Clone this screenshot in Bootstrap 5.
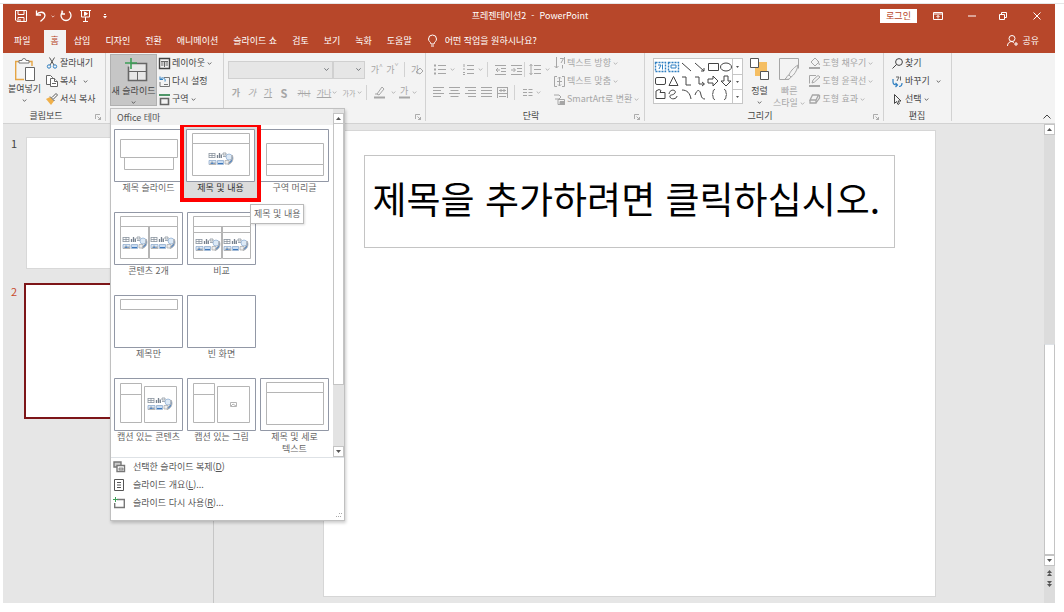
<!DOCTYPE html>
<html lang="ko">
<head>
<meta charset="utf-8">
<meta name="viewport" content="width=device-width, initial-scale=1">
<title>프레젠테이션2 - PowerPoint</title>
<link href="https://cdn.jsdelivr.net/npm/bootstrap@5.3.0/dist/css/bootstrap.min.css" rel="stylesheet">
<style>
:root{--brand:#b7472a;--ink:#444;--off:#a6a6a6;--line:#d2d2d2}
body{font-family:"Noto Sans CJK KR",sans-serif;font-size:9px;line-height:12px;color:var(--ink);background:#fff}
svg{display:block;flex:none;overflow:visible}
.frame{height:100vh;padding:3px 0 9px}
.edge{border-top:1px solid #e6e6e6}
.window{margin:0 9px 0 3px}
.tb{--bs-btn-padding-x:0;--bs-btn-padding-y:0;--bs-btn-font-size:9px;--bs-btn-line-height:12px;--bs-btn-border-width:0;--bs-btn-border-radius:0;--bs-btn-color:var(--ink);display:flex;align-items:center;font-family:inherit;white-space:nowrap}
.tb:disabled{--bs-btn-disabled-color:var(--off);--bs-btn-disabled-opacity:1}
.ink{fill:none;stroke:currentColor}
/* title bar and tabs */
.head{background:var(--brand);color:#fff}
.titlebar{height:24px;padding:0 10px 0 12px}
.side{flex:1 1 0}
.head .tb{--bs-btn-color:#fff}
.login{--bs-btn-color:var(--brand)!important;background:#fff;width:37px;height:14px;justify-content:center}
.wbtn{width:34px;justify-content:center!important}
.tabs{height:25px;padding-left:4px}
.tabs .nav-link{padding:5px 7px 6px;color:#fff;line-height:12px;white-space:nowrap;border-radius:0;margin-right:1px}
.tabs .nav-link:first-child{margin-right:6px}
.tabs .nav-link.active{background:#f3f3f3;color:var(--brand)}
.tell{background:none;border:0;color:#fff;font:inherit;padding:0;width:130px}
.tell::placeholder{color:#fff;opacity:1}
/* ribbon */
.ribbon{background:#f3f3f3;border-bottom:1px solid var(--line);height:71px}
.grp{position:relative;border-right:1px solid var(--line);margin-bottom:2px;flex:none}
.grp-body{height:54px;margin-top:1px}
.grp-name{height:14px;line-height:16px;padding-right:1px}
.rows .tb{height:18px;gap:2px}
.big{flex-direction:column;height:52px;justify-content:flex-start!important}
.trow{height:23px;color:var(--off)}
.cell{width:16px;height:20px;justify-content:center!important}
.vr1{width:1px;height:15px;background:var(--line)}
.fbox{height:18px;font-size:9px;padding:0;border:1px solid #d0d0d0;border-radius:0;background-color:#e6e6e6!important;background-size:5px;background-position:right 3px center;opacity:.8}
.g-clip{width:103px}.g-slide{width:118px}.g-font{width:202px}.g-para{width:219px}.g-draw{width:239px}.g-edit{width:68px}
.launch{position:absolute;right:4px;bottom:1px;color:#999}
.shapes{border:1px solid #c6c6c6;background:#fff;width:90px;height:46px}
.more{width:11px;border-left:1px solid #c6c6c6}
.more .tb{height:15px;justify-content:center}
.more .tb+.tb{border-top:1px solid #c6c6c6}
/* new slide gallery */
.newslide{width:47px;background:#c6c6c6;box-shadow:inset 0 0 0 1px #b0b0b0}
.layouts{--bs-dropdown-padding-y:0;--bs-dropdown-border-radius:0;--bs-dropdown-font-size:9px;--bs-dropdown-border-color:#c0c0c0;--bs-dropdown-color:#555;--bs-dropdown-spacer:0;width:235px;top:100%;left:0;box-shadow:1px 2px 3px #0003}
.themes{background:#f0f0f0;height:16px;padding:2px 6px;line-height:13px}
.tiles{display:grid;grid-template-columns:repeat(3,73px);grid-auto-rows:83px;padding:4px 0 0;height:332px;overflow:hidden}
.tile{display:flex;flex-direction:column;align-items:center;padding:0 0 0 2px;background:none;border:0;font:inherit;line-height:12px;color:#666;width:73px}
.tile.hot{position:relative;height:73px;width:75px;margin:-3px 0 0 -1px;padding:3px 0 0;outline:4px solid #f00;outline-offset:-1px;background:#dcdcdc;color:#333;z-index:1}
.tip{position:absolute;left:139px;top:95px;z-index:3;background:#fff;border:1px solid #bbb;padding:3px;line-height:12px;box-shadow:1px 1px 2px #0002;color:#666;white-space:nowrap}
.sbar{width:11px;background:#e3e3e3}
.sbtn{height:11px;background:#fff;border:1px solid #c4c4c4;justify-content:center!important}
.thumb{background:#fff;border:1px solid #c4c4c4;border-top:0}
.cmd{--bs-dropdown-item-padding-x:2px;--bs-dropdown-item-padding-y:3px;display:flex;align-items:center;gap:8px;line-height:12px;color:#555}
.grip{position:absolute;right:2px;bottom:2px}
/* workspace */
.work{background:#e6e6e6;min-height:0}
.panel{width:211px;border-right:1px solid #c6c6c6;padding:13px 8px 0}
.num{width:15px;font-size:11px;line-height:12px}
.mini{background:#fff;width:174px;aspect-ratio:174/132;border:1px solid #d8d8d8}
.mini.now{outline:2px solid #7d1518;border:0}
.canvas{padding:6px 0 6px;min-width:0}
.slide{height:100%;aspect-ratio:613/467;background:#fff;border:1px solid #d6d6d6;padding:24px 40px}
.ttl{height:93px;border:1px solid #c4c4c4;padding:0 8px 8px;font-size:37px;line-height:48px;color:#000;font-weight:400;white-space:nowrap}
.vscroll{width:11px;background:#dcdcdc;padding-bottom:7px}
</style>
</head>
<body>
<svg width="0" height="0" class="position-absolute" aria-hidden="true">
<symbol id="chev" viewBox="0 0 5 3"><path d="M.7.5 2.5 2.3 4.3.5" fill="none" stroke="currentColor" stroke-width=".8"/></symbol>
<symbol id="up" viewBox="0 0 5 3"><path d="M0 3h5L2.500 0z" fill="#555"/></symbol>
<symbol id="down" viewBox="0 0 5 3"><path d="M0 0h5L2.500 3z" fill="#555"/></symbol>
<symbol id="launch" viewBox="0 0 6 6"><path d="M.5 5V.5H5M2.500 2.500 5.500 5.500M5.500 3v2.500H3" fill="none" stroke="currentColor" stroke-width=".8"/></symbol>
<symbol id="media" viewBox="0 0 26 14">
<g fill="none" stroke="#8a94a0" stroke-width=".8"><path d="M1 1.500h6M1 3.500h6M1 5.500h6M1 1v5M4 1v5M7 1v5"/><path d="M15 1h3v2h-3zM15 4.500h4"/></g>
<path d="M9.500 3v3M11.500 1v5M13.300 2.500v3.500" stroke="#77828f" stroke-width="1.300"/>
<path d="M1 8.500h7v4H1z" fill="#dbe9f7" stroke="#86a5c8" stroke-width=".7"/><path d="M1.500 12.500l2.500-3 2 2 1-1 1 2z" fill="#4f86c6"/>
<path d="M9.500 8.500h6v4h-6z" fill="#c9dcf1" stroke="#86a5c8" stroke-width=".7"/><path d="M10 11.500h5" stroke="#3d78bd"/>
<path d="M17 8.500h4v3.500h-4z" fill="#eee" stroke="#999" stroke-width=".6"/>
<circle cx="21" cy="5" r="3" fill="#dce9f6" stroke="#94b3d6" stroke-width=".8"/><path d="M24 3c2 3 1 8-4 9.500l1-2.500c2-1 3-3 3-7z" fill="#4b83c4"/>
</symbol>
</svg>

<div class="frame d-flex flex-column">
<div class="edge"></div>
<div class="window d-flex flex-column flex-grow-1" style="min-height:0">
<header class="head">
 <div class="titlebar d-flex align-items-center">
  <div class="side d-flex align-items-center gap-2">
   <button class="btn tb" aria-label="저장"><svg width="12" height="12" class="ink"><path d="M.5.5h11v11H2L.5 10zM3 .5v4h6v-4M3 11.500V7.500h6v4M5 9v2"/></svg></button>
   <button class="btn tb gap-1" aria-label="실행 취소"><svg width="12" height="12" class="ink" stroke-width="1.300"><path d="M1.500.5V5H6M1.500 5C4 1 9.500 1.500 10 5.500c0 3-2.500 4-4.500 6"/></svg><svg width="4" height="3"><use href="#chev"/></svg></button>
   <button class="btn tb" aria-label="다시 실행" style="margin-left:-3px"><svg width="12" height="12" class="ink" stroke-width="1.300"><path d="M3 1.500A5 5 0 1 0 9 1.500M2 .5v3.500h3"/></svg></button>
   <button class="btn tb" aria-label="처음부터 시작"><svg width="11" height="12" class="ink"><path d="M0 .5h11M1.500.5v6.500h8V.5M5.500 7v4M3 11.500h5"/><path d="M4.500 2l3 1.700-3 1.800z" fill="#fff"/></svg></button>
   <button class="btn tb ms-1" aria-label="도구 모음 사용자 지정"><svg width="4" height="5"><path d="M1 .5h2" stroke="#fff"/><path d="M0 2h4L2 4.500z" fill="#fff"/></svg></button>
  </div>
  <div class="text-nowrap">프레젠테이션2 &nbsp;-&nbsp; PowerPoint</div>
  <div class="side d-flex justify-content-end align-items-center">
   <button class="btn tb login me-1">로그인</button>
   <button class="btn tb wbtn" aria-label="리본 메뉴 표시 옵션"><svg width="10" height="8" class="ink"><path d="M.5.5h9v7h-9zM.5 2h9M5 6.500V3.500M3.500 5 5 3.500 6.500 5"/></svg></button>
   <button class="btn tb wbtn" aria-label="최소화"><svg width="8" height="2"><path d="M0 1h8" stroke="#fff"/></svg></button>
   <button class="btn tb wbtn ps-0" style="width:28px" aria-label="이전 크기로"><svg width="8" height="8" class="ink"><path d="M.5 2.500h5v5h-5zM2.500 2V.5h5v5H6"/></svg></button>
   <button class="btn tb ms-3 me-1" aria-label="닫기"><svg width="8" height="8" class="ink"><path d="M.5.5l7 7M7.500.5l-7 7"/></svg></button>
  </div>
 </div>
 <div class="tabs d-flex align-items-end">
  <nav class="nav flex-nowrap">
   <a class="nav-link" href="#">파일</a><a class="nav-link active" href="#">홈</a><a class="nav-link" href="#">삽입</a><a class="nav-link" href="#">디자인</a><a class="nav-link" href="#">전환</a><a class="nav-link" href="#">애니메이션</a><a class="nav-link" href="#">슬라이드 쇼</a><a class="nav-link" href="#">검토</a><a class="nav-link" href="#">보기</a><a class="nav-link" href="#">녹화</a><a class="nav-link" href="#">도움말</a>
  </nav>
  <div class="d-flex align-items-center gap-2 align-self-center ps-2">
   <label for="tell" aria-label="설명"><svg width="9" height="12" class="ink"><path d="M3 9C3 7 .5 6.500.5 4a4 4 0 0 1 8 0C8.500 6.500 6 7 6 9zM3 11h3"/></svg></label>
   <input id="tell" class="tell" type="text" placeholder="어떤 작업을 원하시나요?">
  </div>
  <button class="btn tb gap-1 ms-auto align-self-center me-3"><svg width="11" height="11" class="ink"><circle cx="5" cy="3.500" r="3"/><path d="M.5 11c0-3 2-4.500 4.500-4.500L7 7.500M9 7v4M7 9h4"/></svg>공유</button>
 </div>
</header>

<div class="ribbon d-flex">
 <section class="grp g-clip">
  <div class="grp-body d-flex ps-1">
   <button class="btn tb big pe-1 ps-0 pt-1" style="width:39px"><svg width="20" height="25" fill="none"><path d="M9 21.500H.7V3.500H17V8" stroke="#e5a544" stroke-width="1.400"/><path d="M4 5V2.500h3a2 2 0 0 1 4 0h3V5z" fill="#fff" stroke="#777"/><path d="M10.500 9.500h9v13h-9z" fill="#fff" stroke="#666"/></svg><span>붙여넣기</span><svg width="5" height="3" class="mt-1"><use href="#chev"/></svg></button>
   <div class="rows">
    <button class="btn tb"><svg width="12" height="12" fill="none"><path d="M3.500.5 8 8M8.500.5 4 8" stroke="#555"/><circle cx="3" cy="9.500" r="1.700" stroke="#2f7fc1"/><circle cx="9" cy="9.500" r="1.700" stroke="#2f7fc1"/></svg>잘라내기</button>
    <button class="btn tb"><svg width="12" height="12" fill="#fff" stroke="#666"><path d="M.5.5h4l2 2v7h-6z"/><path d="M4.500 3.500h4l3 3v5h-7z"/><path d="M8.500 3.500v3h3M6 8.500h4"/></svg>복사 <svg width="5" height="3" class="ms-1"><use href="#chev"/></svg></button>
    <button class="btn tb"><svg width="12" height="12"><path d="M0 6l4-2 4 4-3 4z" fill="#f0b04a"/><path d="M4 3.500 8.500 8M6 4.500l4-4 1.500 1.500-4 4" stroke="#555" fill="#fff"/></svg>서식 복사</button>
   </div>
  </div>
  <div class="grp-name text-center pe-3">클립보드</div><svg class="launch" width="6" height="6"><use href="#launch"/></svg>
 </section>

 <section class="grp g-slide">
  <div class="grp-body d-flex ps-1">
   <div class="dropdown">
    <button class="btn tb big newslide pt-1" aria-expanded="true"><svg width="22" height="23" fill="none" class="ms-1"><path d="M5.500 5.500h16v17h-18v-14" stroke="#666" stroke-width="1.600" fill="#e8e8e8"/><path d="M4 13.500h17M12.500 13.500v9" stroke="#666"/><path d="M0 5h12M6 0v11" stroke="#3c9f57" stroke-width="1.600"/></svg><span class="mt-1">새 슬라이드</span><svg width="5" height="3" class="mt-1"><use href="#chev"/></svg></button>
    <div class="dropdown-menu layouts show">
     <div class="d-flex">
      <div class="flex-grow-1">
       <div class="themes">Office 테마</div>
       <div class="tiles">
        <button class="tile"><svg width="69" height="53" fill="#fff" stroke="#b5b5b5"><path d="M.5.5h68v52H.5z" stroke="#9298a6"/><path d="M6.500 10.500h57v18h-57zM10.500 28.500h49v12h-49z"/></svg>제목 슬라이드</button>
        <button class="tile hot"><svg width="69" height="53" fill="#fff" stroke="#b5b5b5"><path d="M.5.5h68v52H.5z" stroke="#9298a6"/><path d="M6.500 4.500h57v10h-57zM6.500 14.500h57v32h-57z"/><use href="#media" x="22" y="23" width="26" height="14"/></svg>제목 및 내용</button>
        <button class="tile"><svg width="69" height="53" fill="#fff" stroke="#b5b5b5"><path d="M.5.5h68v52H.5z" stroke="#9298a6"/><path d="M6.500 14.500h57v21h-57zM6.500 35.500h57v11h-57z"/></svg>구역 머리글</button>
        <button class="tile"><svg width="69" height="53" fill="#fff" stroke="#b5b5b5"><path d="M.5.5h68v52H.5z" stroke="#9298a6"/><path d="M6.500 4.500h57v10h-57zM6.500 14.500h28v32h-28zM35.500 14.500h28v32h-28z"/><use href="#media" x="8" y="24" width="26" height="14"/><use href="#media" x="36" y="24" width="26" height="14"/></svg>콘텐츠 2개</button>
        <button class="tile"><svg width="69" height="53" fill="#fff" stroke="#b5b5b5"><path d="M.5.5h68v52H.5z" stroke="#9298a6"/><path d="M6.500 4.500h57v10h-57zM6.500 14.500h28v6h-28zM35.500 14.500h28v6h-28zM6.500 20.500h28v26h-28zM35.500 20.500h28v26h-28z"/><use href="#media" x="8" y="26" width="26" height="14"/><use href="#media" x="36" y="26" width="26" height="14"/></svg>비교</button>
        <span></span>
        <button class="tile"><svg width="69" height="53" fill="#fff" stroke="#b5b5b5"><path d="M.5.5h68v52H.5z" stroke="#9298a6"/><path d="M6.500 4.500h57v10h-57z"/></svg>제목만</button>
        <button class="tile"><svg width="69" height="53" fill="#fff"><path d="M.5.5h68v52H.5z" stroke="#9298a6"/></svg>빈 화면</button>
        <span></span>
        <button class="tile"><svg width="69" height="53" fill="#fff" stroke="#b5b5b5"><path d="M.5.5h68v52H.5z" stroke="#9298a6"/><path d="M6.500 5.500h21v11h-21zM6.500 16.500h21v28h-21zM30.500 8.500h32v36h-32z"/><use href="#media" x="33" y="19" width="26" height="14"/></svg>캡션 있는 콘텐츠</button>
        <button class="tile"><svg width="69" height="53" fill="#fff" stroke="#b5b5b5"><path d="M.5.5h68v52H.5z" stroke="#9298a6"/><path d="M6.500 5.500h21v11h-21zM6.500 16.500h21v28h-21zM30.500 8.500h32v36h-32z"/><path d="M43.500 24.500h6v4h-6zM44 28l2-2 3 2"/></svg>캡션 있는 그림</button>
        <button class="tile"><svg width="69" height="53" fill="#fff" stroke="#b5b5b5"><path d="M.5.5h68v52H.5z" stroke="#9298a6"/><path d="M6.500 4.500h57v10h-57zM6.500 14.500h57v32h-57z"/></svg><span>제목 및 세로<br>텍스트</span></button>
       </div>
      </div>
      <div class="sbar d-flex flex-column">
       <button class="btn tb sbtn mt-1" aria-label="위로"><svg width="5" height="3"><use href="#up"/></svg></button>
       <div class="thumb" style="height:75%"></div>
       <button class="btn tb sbtn mt-auto" aria-label="아래로"><svg width="5" height="3"><use href="#down"/></svg></button>
      </div>
     </div>
     <div class="border-top pb-2">
      <a class="dropdown-item cmd" href="#"><svg width="12" height="12" fill="#ccc" stroke="#777" stroke-width="1.400"><path d="M1 1h7v5H1z"/><path d="M4 4.500h7.500v6H4z" fill="#fff"/><path d="M6 7h4v2H6z" stroke-width=".8"/></svg><span>선택한 슬라이드 복제(<u>D</u>)</span></a>
      <a class="dropdown-item cmd" href="#"><svg width="12" height="12" class="ink"><path d="M1.500.5h9v11h-9zM4 3.500h4M4 6h4M4 8.500h4"/></svg><span>슬라이드 개요(<u>L</u>)...</span></a>
      <a class="dropdown-item cmd" href="#"><svg width="12" height="12" fill="none"><path d="M4 2.500h7.300v8H1.700V6" stroke="#777" stroke-width="1.400"/><path d="M0 2.500h5M2.500 0v5" stroke="#3c9f57"/></svg><span>슬라이드 다시 사용(<u>R</u>)...</span></a>
     </div>
     <svg class="grip" width="6" height="6"><path d="M3 1.500h3M0 4.500h6" stroke="#aaa" stroke-dasharray="1 1"/></svg>
     <div class="tip" role="tooltip">제목 및 내용</div>
    </div>
   </div>
   <div class="rows" style="padding-left:2px">
    <button class="btn tb"><svg width="11" height="11" class="ink"><path d="M.5.5h10v10H.5z" stroke-width="1.400"/><path d="M2 3.500h7M5.500 4v5M2 5h2.500M6.500 5H9M2 7h2.500M6.500 7H9" stroke-width=".8"/></svg>레이아웃 <svg width="5" height="3"><use href="#chev"/></svg></button>
    <button class="btn tb"><svg width="11" height="11" fill="none"><path d="M5 1.500h5.500v9H1V6" stroke="#777"/><path d="M1 .5v3h3M1 3.500C3 .5 7 2 6 5.500" stroke="#2f7fc1"/><path d="M5 8.500h4" stroke="#777"/></svg>다시 설정</button>
    <button class="btn tb"><svg width="11" height="11" fill="none"><path d="M0 1h11" stroke="#4f9668" stroke-width="2"/><path d="M1.500 4.500h8v6h-8z" stroke="#666" stroke-width="1.600"/></svg>구역 <svg width="5" height="3"><use href="#chev"/></svg></button>
   </div>
  </div>
 </section>

 <section class="grp g-font">
  <div class="grp-body pt-1 ps-1">
   <div class="trow d-flex align-items-center">
    <select class="form-select fbox" aria-label="글꼴" style="width:107px" disabled><option></option></select>
    <select class="form-select fbox" aria-label="글꼴 크기" style="width:32px" disabled><option></option></select>
    <button class="btn tb cell ms-1" disabled>가<sup>^</sup></button><button class="btn tb cell" disabled>가<sup>ˇ</sup></button>
    <div class="vr1 ms-1 me-1"></div>
    <button class="btn tb cell" disabled aria-label="서식 지우기"><span>가</span><svg width="4" height="8" class="ink"><path d="M-3 6 1 2l3 3-3 3z"/></svg></button>
   </div>
   <div class="trow d-flex align-items-center">
    <button class="btn tb cell fw-bold" disabled>가</button><button class="btn tb cell fst-italic" disabled>가</button><button class="btn tb cell text-decoration-underline" disabled>가</button><button class="btn tb cell fw-bold" disabled style="font-size:11px">S</button><button class="btn tb cell text-decoration-line-through mx-1" disabled style="font-size:7px">가나</button>
    <button class="btn tb cell text-decoration-underline" disabled style="font-size:8px">가나</button><svg width="5" height="3"><use href="#chev"/></svg>
    <button class="btn tb cell ms-1" disabled style="font-size:7px">가가</button><svg width="5" height="3"><use href="#chev"/></svg>
    <div class="vr1 ms-1"></div>
    <button class="btn tb cell mx-1" disabled aria-label="강조색"><svg width="11" height="13" class="ink"><path d="M3 8l5-7 2 2-5 6zM1 8h3"/><path d="M0 11.500h11" stroke-width="2"/></svg></button><svg width="5" height="3"><use href="#chev"/></svg>
    <button class="btn tb cell" disabled aria-label="글꼴 색"><svg width="11" height="13"><text x="1" y="8" font-size="9" fill="currentColor">가</text><path d="M0 11.500h11" stroke="currentColor" stroke-width="2"/></svg></button><svg width="5" height="3"><use href="#chev"/></svg>
   </div>
  </div>
  <svg class="launch" width="6" height="6"><use href="#launch"/></svg>
 </section>

 <section class="grp g-para">
  <div class="grp-body d-flex ps-1">
   <div class="pt-1" style="width:120px">
    <div class="trow d-flex align-items-center ps-1">
     <button class="btn tb gap-1" disabled aria-label="글머리 기호"><svg width="12" height="11" class="ink"><path d="M4 1.500h8M4 5.500h8M4 9.500h8"/><path d="M0 1.500h2M0 5.500h2M0 9.500h2" stroke-width="2"/></svg><svg width="5" height="3"><use href="#chev"/></svg></button>
     <button class="btn tb gap-1 ms-2" disabled aria-label="번호 매기기"><svg width="11" height="11" class="ink"><path d="M4 1.500h7M4 5.500h7M4 9.500h7M1 0v3M0 5h2M0 8.500h2M0 10.500h2"/></svg><svg width="5" height="3"><use href="#chev"/></svg></button>
     <div class="vr1 ms-1"></div>
     <button class="btn tb cell ms-1" disabled aria-label="내어쓰기"><svg width="11" height="10" class="ink"><path d="M0 .5h11M6 3.500h5M6 6.500h5M0 9.500h11M5 5H1M3 3 1 5l2 2"/></svg></button><button class="btn tb cell" disabled aria-label="들여쓰기"><svg width="11" height="10" class="ink"><path d="M0 .5h11M6 3.500h5M6 6.500h5M0 9.500h11M0 5h4M2.500 3l2 2-2 2"/></svg></button>
     <div class="vr1 me-1"></div>
     <button class="btn tb gap-1" disabled aria-label="줄 간격"><svg width="12" height="11" class="ink"><path d="M5 1.500h7M5 5.500h7M5 9.500h7M2 0v11M.5 2 2 .5 3.500 2M.5 9 2 10.500 3.500 9"/></svg><svg width="5" height="3"><use href="#chev"/></svg></button>
    </div>
    <div class="trow d-flex align-items-center">
     <button class="btn tb cell" disabled aria-label="왼쪽 맞춤"><svg width="11" height="11" class="ink"><path d="M0 .5h11M0 3.500h8M0 6.500h11M0 9.500h8"/></svg></button><button class="btn tb cell" disabled aria-label="가운데 맞춤"><svg width="11" height="11" class="ink"><path d="M0 .5h11M1.500 3.500h8M0 6.500h11M1.500 9.500h8"/></svg></button><button class="btn tb cell" disabled aria-label="오른쪽 맞춤"><svg width="11" height="11" class="ink"><path d="M0 .5h11M3 3.500h8M0 6.500h11M3 9.500h8"/></svg></button><button class="btn tb cell" disabled aria-label="양쪽 맞춤"><svg width="11" height="11" class="ink"><path d="M0 .5h11M0 3.500h11M0 6.500h11M0 9.500h11"/></svg></button><button class="btn tb cell" disabled aria-label="균등 분할"><svg width="11" height="11" class="ink"><path d="M.5 0v11M10.500 0v11M0 .5h11M2 3.500h7M0 6.500h11M2 9.500h7M4 2v3M7 2v3"/></svg></button>
     <div class="vr1 ms-1 me-2"></div>
     <button class="btn tb gap-1" disabled aria-label="단 추가"><svg width="9" height="7" class="ink"><path d="M0 .5h4M0 3.500h4M0 6.500h4M5.500.5h4M5.500 3.500h4M5.500 6.500h4"/></svg><svg width="5" height="3"><use href="#chev"/></svg></button>
    </div>
   </div>
   <div class="rows ps-1">
    <button class="btn tb" disabled><svg width="11" height="12" class="ink"><path d="M2.500 0v11M.5 9l2 2 2-2M6 1.500h3.500L7 6M10.500 0v7M8.500 8v3.500"/></svg>텍스트 방향 <svg width="5" height="3"><use href="#chev"/></svg></button>
    <button class="btn tb" disabled><svg width="11" height="11" class="ink"><path d="M3 .5H.5v10H3M8 .5h2.500v10H8M5.500 1v9M3 5.500h5M4 2.500 5.500 1 7 2.500M4 8.500 5.500 10 7 8.500"/></svg>텍스트 맞춤 <svg width="5" height="3"><use href="#chev"/></svg></button>
    <button class="btn tb" disabled><svg width="11" height="11" class="ink"><path d="M0 1h5l2 2-2 2H1M4 5.500h6.500v5H4z"/><path d="M6 7.500h4.500v3H6z" fill="currentColor"/></svg>SmartArt로 변환 <svg width="5" height="3"><use href="#chev"/></svg></button>
   </div>
  </div>
  <div class="grp-name text-center pe-2">단락</div><svg class="launch" width="6" height="6"><use href="#launch"/></svg>
 </section>

 <section class="grp g-draw">
  <div class="grp-body d-flex ps-2">
   <div class="shapes d-flex mt-1">
    <svg width="78" height="44" class="ink flex-grow-1"><g stroke="#2f7fc1"><path d="M1.500 3.500h10v9h-10zM14.500 3.500h10v9h-10z" stroke-width="1.400" stroke-dasharray="2 1"/><path d="M4 6h3l-2 4M8.500 5.500v5M17 6h5v3h-5z"/></g><path d="M28 4l9 8M41 4l9 8M50 9v3h-3M54.500 4.500h10v7h-10z"/><ellipse cx="72" cy="8" rx="5.500" ry="4"/><rect x="1.500" y="18.500" width="10" height="7" rx="1.500"/><path d="M15 26.500 19.500 17.500 24 26.500zM28 18h4v8h5M41 18h4v7h5M48 23l2.500 2-2.500 2M54 20h5v-3l5 5-5 5v-3h-5zM70 17h4v5h3l-5 5-5-5h3zM2 39.500V32l3-1.500 2 1-1 2h5v6zM15 35c1-6 8-4 6-1s-6 1-5 4 7 2 7-1M28 31c5 0 8 3 9 9M41 36c2-6 5-6 6 0 .5 3 2 4 4 4M61 30.500c-3 0-1 4-3 5 2 1 0 5 3 5M70 30.500c3 0 1 4 3 5-2 1 0 5-3 5"/></svg>
    <div class="more"><button class="btn tb w-100" aria-label="이전 도형"><svg width="3" height="2"><use href="#down"/></svg></button><button class="btn tb w-100" aria-label="다음 도형"><svg width="3" height="2"><use href="#down"/></svg></button><button class="btn tb w-100" aria-label="도형 더 보기"><svg width="3" height="2"><use href="#down"/></svg></button></div>
   </div>
   <button class="btn tb big pt-1" style="margin-left:7px"><svg width="19" height="23"><path d="M5 4h12v14H5z" fill="#f5be62"/><path d="M.5.5h8v9h-8zM10.500 13.500h8v8h-8z" fill="#fff" stroke="#555"/></svg><span class="mt-1">정렬</span><svg width="5" height="3" class="mt-1"><use href="#chev"/></svg></button>
   <button class="btn tb big pt-1 ms-1" disabled><svg width="20" height="23" class="ink"><path d="M10 21.500H.5V.5h19v10M19 7c-5 3-8 7-9 10l2 2c3-2 6-6 7-12M10 17c-2 0-2 3-4 4 3 1 5 0 6-2"/></svg><span class="mt-1 text-center">빠른<br>스타일 <svg width="5" height="3" class="d-inline"><use href="#chev"/></svg></span></button>
   <div class="rows ps-1">
    <button class="btn tb" disabled><svg width="11" height="12" class="ink"><path d="M2 5l4-4 4 4-4 4zM9 4l1.500 4"/><path d="M0 11h11" stroke-width="2"/></svg>도형 채우기 <svg width="5" height="3"><use href="#chev"/></svg></button>
    <button class="btn tb" disabled><svg width="11" height="12" class="ink"><path d="M7 .5H.5v8M3 8l1-3 5-4.500L11 2 5.500 7z"/><path d="M0 11h11" stroke-width="2"/></svg>도형 윤곽선 <svg width="5" height="3"><use href="#chev"/></svg></button>
    <button class="btn tb" disabled><svg width="11" height="11" class="ink"><path d="M3.500 1h6l-2.500 5H1zM1 6v3h6V6M7 9l3.500-5V1" stroke-width="1.300"/></svg>도형 효과 <svg width="5" height="3"><use href="#chev"/></svg></button>
   </div>
  </div>
  <div class="grp-name text-center pe-2">그리기</div><svg class="launch" width="6" height="6"><use href="#launch"/></svg>
 </section>

 <section class="grp g-edit">
  <div class="grp-body rows ps-2">
   <button class="btn tb"><svg width="11" height="11" class="ink"><circle cx="7" cy="4" r="3.400"/><path d="M4.500 6.500.5 10.500"/></svg>찾기</button>
   <button class="btn tb"><svg width="11" height="11" fill="none"><path d="M1 3v3c0 2 1 3 4 3M3.500 7 5.500 9l-2 2M7 10.500c3 0 3-2 3-3.500" stroke="#2f7fc1" stroke-width="1.200"/><path d="M4 1h3L5 5M8.500.5v4" stroke="#666"/></svg>바꾸기 <svg width="5" height="3" class="ms-1"><use href="#chev"/></svg></button>
   <button class="btn tb"><svg width="11" height="11" class="ink"><path d="M2.500.5v9l2-2 1.500 3 1.500-1L6 7h3z"/></svg>선택 <svg width="5" height="3"><use href="#chev"/></svg></button>
  </div>
  <div class="grp-name text-center">편집</div>
 </section>
 <button class="btn tb ms-auto align-self-end me-1 pb-1" aria-label="리본 축소"><svg width="8" height="5" class="ink"><path d="M.5 4.500 4 1l3.500 3.500"/></svg></button>
</div>

<main class="work d-flex flex-grow-1">
 <aside class="panel flex-shrink-0">
  <div class="d-flex mb-3"><span class="num">1</span><div class="mini"></div></div>
  <div class="d-flex"><span class="num" style="color:#c8492b">2</span><div class="mini now"></div></div>
 </aside>
 <div class="canvas flex-grow-1 d-flex justify-content-center">
  <div class="slide"><h1 class="ttl d-flex align-items-center m-0">제목을 추가하려면 클릭하십시오.</h1></div>
 </div>
 <div class="vscroll d-flex flex-column flex-shrink-0">
  <button class="btn tb sbtn" aria-label="위로"><svg width="5" height="3"><use href="#up"/></svg></button>
  <div style="flex:209"></div>
  <div class="thumb border-top" style="flex:209"></div>
  <button class="btn tb sbtn" aria-label="아래로"><svg width="5" height="3"><use href="#down"/></svg></button>
  <button class="btn tb justify-content-center py-1" aria-label="이전 슬라이드"><svg width="5" height="7"><use href="#up" width="5" height="3"/><use href="#up" y="3" width="5" height="3"/></svg></button>
  <button class="btn tb justify-content-center pb-2" aria-label="다음 슬라이드"><svg width="5" height="7"><use href="#down" width="5" height="3"/><use href="#down" y="3" width="5" height="3"/></svg></button>
 </div>
</main>
</div>
</div>
<script src="https://cdn.jsdelivr.net/npm/bootstrap@5.3.0/dist/js/bootstrap.bundle.min.js"></script>
</body>
</html>
